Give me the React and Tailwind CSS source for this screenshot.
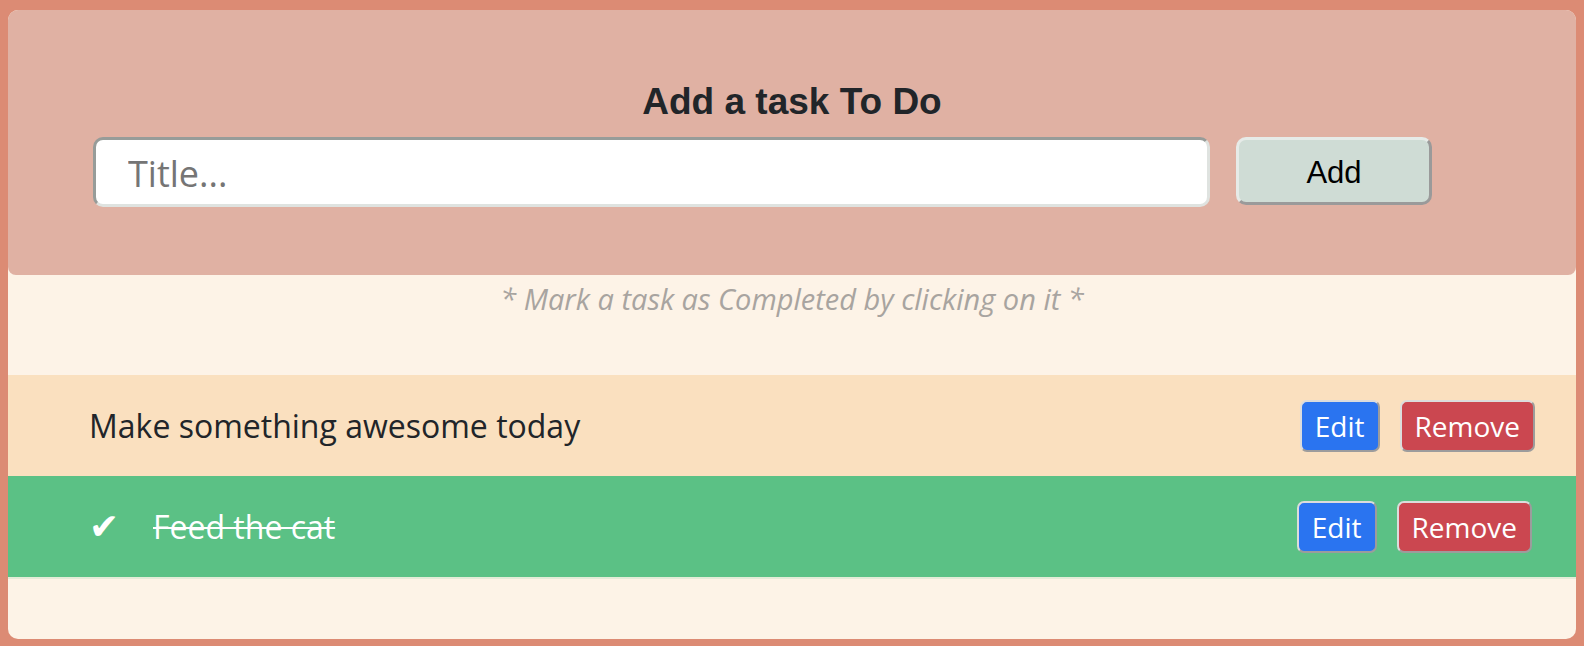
import { useState } from "react";

const initialTasks = [
  { id: 1, title: "Make something awesome today", done: false },
  { id: 2, title: "Feed the cat", done: true },
];

const btn =
  "rounded-[7px] border-2 border-t-[#dcdcdc] border-l-[#dcdcdc] border-b-[#9c9c9c] border-r-[#9c9c9c] px-[13px] py-[5px] text-[28px] leading-[38px] text-white font-['Open_Sans']";

const TaskRow = ({ task, onToggle }) => {
  return (
    <li
      onClick={() => onToggle(task.id)}
      className={
        task.done
          ? "h-[103px] flex items-center bg-[#5bc185] pl-[81px] pr-[44px] border-b-2 border-[#e4ecd8] text-white"
          : "h-[101px] flex items-center bg-[#fae0bf] pl-[81px] pr-[41px] text-[#212529]"
      }
    >
      {task.done && (
        <span className="w-[64px] text-[36px] leading-[44px] font-['DejaVu_Sans']">✔</span>
      )}
      <span
        className={
          task.done
            ? "flex-1 text-[32px] leading-[44px] line-through decoration-[2px]"
            : "flex-1 text-[32px] leading-[44px]"
        }
      >
        {task.title}
      </span>
      <div className="flex items-center gap-[20px]">
        <button className={`${btn} bg-[#2a74f0]`}>Edit</button>
        <button className={`${btn} bg-[#cb4750]`}>Remove</button>
      </div>
    </li>
  );
};

export default function App() {
  let [tasks, setTasks] = useState(initialTasks);
  let [title, setTitle] = useState("");

  function toggle(id) {
    setTasks(tasks.map((t) => (t.id === id ? { ...t, done: !t.done } : t)));
  }

  return (
    <div className="min-h-screen bg-[#dc8b74] pt-[10px] px-[8px] pb-[7px] font-['Open_Sans',sans-serif]">
      <div className="h-[629px] bg-[#fdf3e7] rounded-[10px] overflow-hidden">
        <div className="h-[265px] bg-[#e0b1a3] rounded-[8px] pt-[70px]">
          <h3 className="text-center text-[37px] leading-[43px] font-bold text-[#212529] font-['Liberation_Sans',Arial,sans-serif]">
            Add a task To Do
          </h3>
          <div className="flex items-start mt-[14px] ml-[85px] gap-[26px]">
            <input
              type="text"
              value={title}
              onChange={(e) => setTitle(e.target.value)}
              placeholder="Title..."
              className="w-[1117px] h-[70px] bg-white rounded-[10px] border-[3px] border-t-[#979c99] border-l-[#979c99] border-b-[#dfe3e0] border-r-[#dfe3e0] pl-[32px] pt-[2px] text-[36px] text-[#333] placeholder:text-[#757575] outline-none"
            />
            <button className="w-[196px] h-[68px] pt-[4px] bg-[#cfdcd5] rounded-[10px] border-[3px] border-t-[#e6ebe8] border-l-[#e6ebe8] border-b-[#9a9a9a] border-r-[#9a9a9a] text-[31px] text-black font-['Liberation_Sans',Arial,sans-serif]">
              Add
            </button>
          </div>
        </div>
        <p className="mt-[5px] text-center italic text-[29px] leading-[38px] text-[#a8a4a0]">
          * Mark a task as Completed by clicking on it *
        </p>
        <ul className="mt-[57px]">
          {tasks.map((task) => (
            <TaskRow key={task.id} task={task} onToggle={toggle} />
          ))}
        </ul>
      </div>
    </div>
  );
}
